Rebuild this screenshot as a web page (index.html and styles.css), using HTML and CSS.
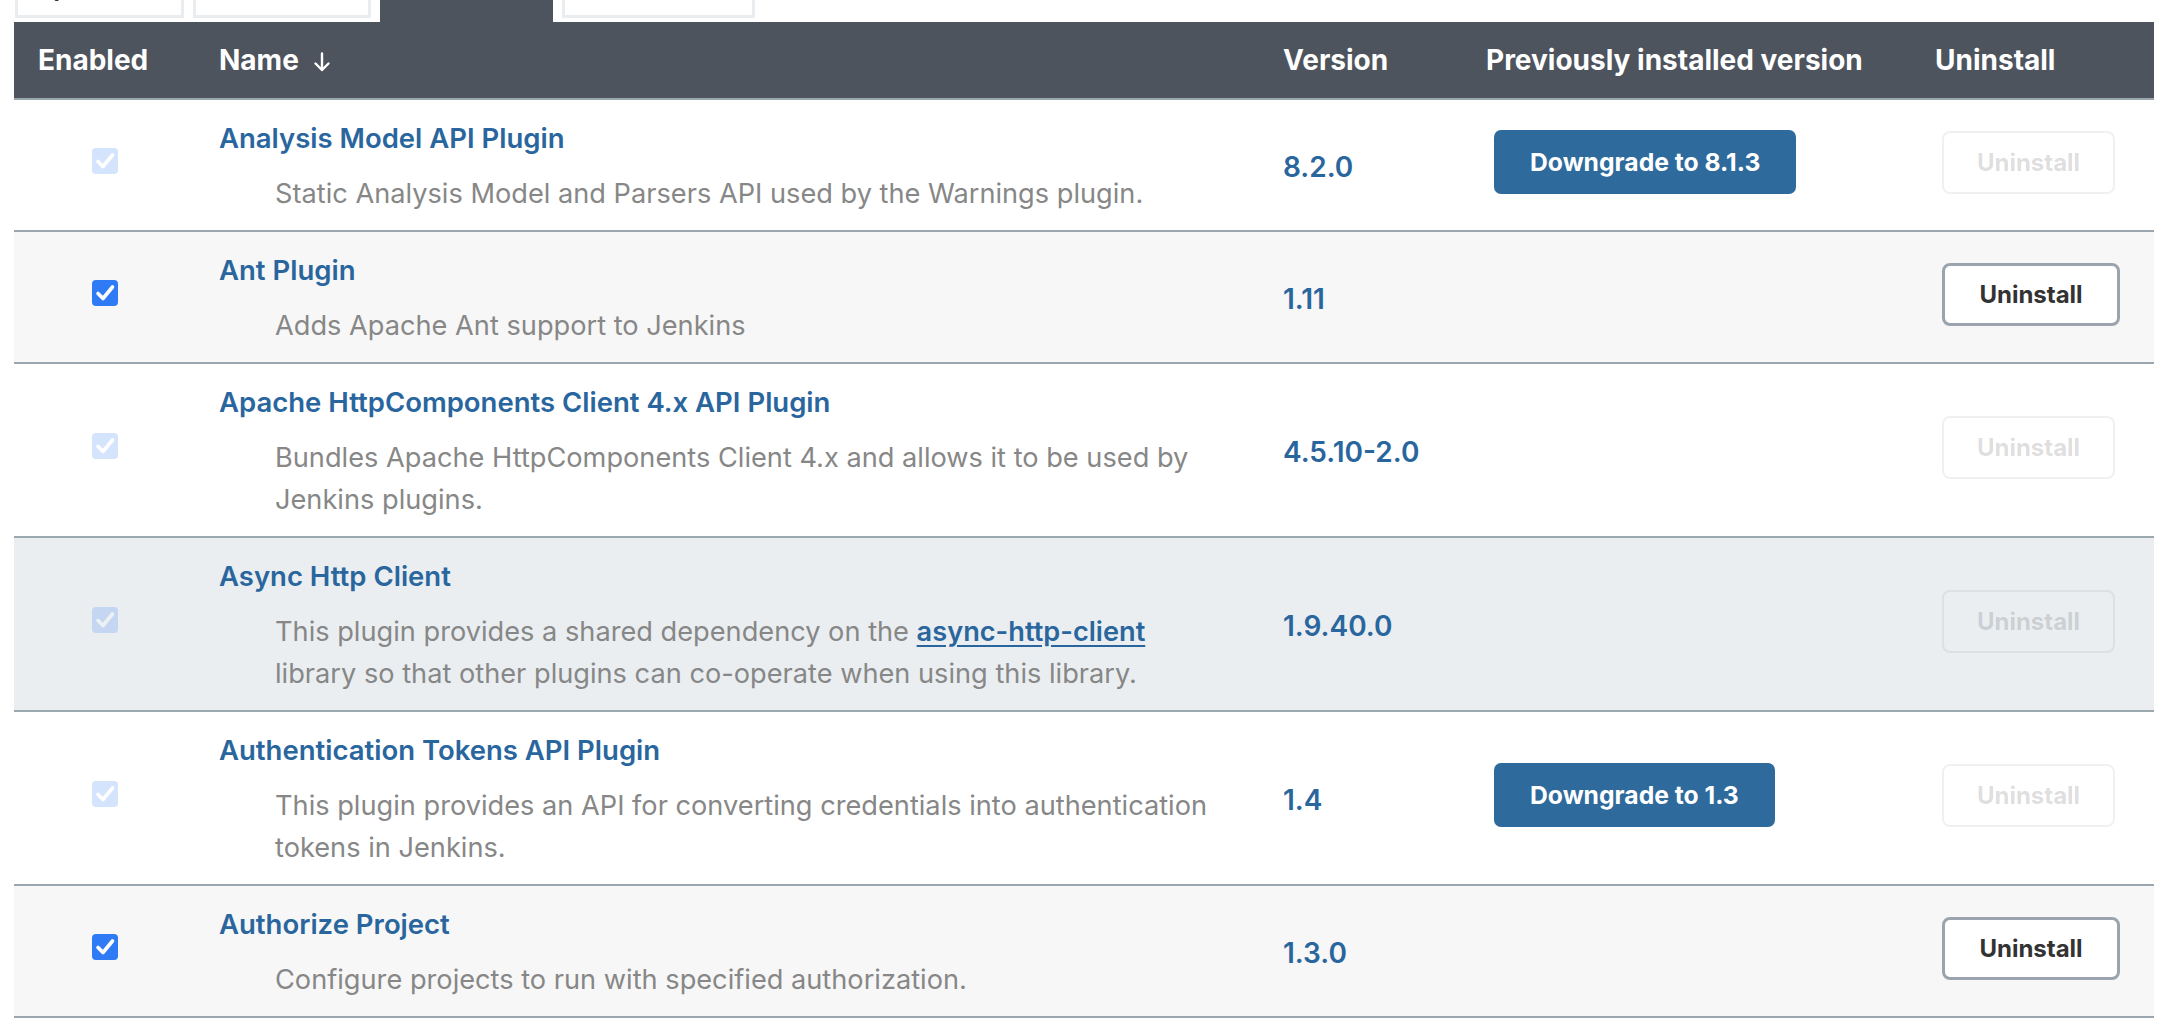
FILE: index.html
```html
<!DOCTYPE html>
<html lang="en">
<head>
  <meta charset="UTF-8" />
  <title>Installed plugins</title>
  <link rel="stylesheet" href="styles.css">
</head>
<body>

  <div class="page">
    <div class="tabs">
      <div class="tab" style="width: 169px"><span class="tab-label">Updates</span></div>
      <div class="tab" style="width: 178px"><span class="tab-label">Available</span></div>
      <div class="tab active" style="width: 173px"><span class="tab-label">Installed</span></div>
      <div class="tab" style="width: 193px"><span class="tab-label">Advanced</span></div>
    </div>

    <table class="plugins">
      <colgroup>
        <col class="col-enabled">
        <col class="col-name">
        <col class="col-version">
        <col class="col-prev">
        <col class="col-uninstall">
      </colgroup>
      <thead>
        <tr>
          <th>Enabled</th>
          <th>Name <svg class="sort-arrow" width="18" height="20" viewBox="0 0 18 20"><path d="M9 1.5V18M2.5 11.5L9 18l6.5-6.5" fill="none" stroke="#fff" stroke-width="2.4" stroke-linecap="round" stroke-linejoin="round"/></svg></th>
          <th>Version</th>
          <th>Previously installed version</th>
          <th>Uninstall</th>
        </tr>
      </thead>
      <tbody>
        <tr>
          <td class="center"><span class="check disabled"><svg width="26" height="26" viewBox="0 0 26 26"><path d="M6 13.5l5 5 9.5-11.5" fill="none" stroke="#fff" stroke-width="3.6" stroke-linecap="round" stroke-linejoin="round"/></svg></span></td>
          <td class="name-cell">
            <a class="plugin-name" href="#">Analysis Model API Plugin</a>
            <div class="plugin-desc">Static Analysis Model and Parsers API used by the Warnings plugin.</div>
          </td>
          <td class="version">8.2.0</td>
          <td class="action"><button class="btn-downgrade">Downgrade to 8.1.3</button></td>
          <td class="action"><button class="btn-uninstall" disabled>Uninstall</button></td>
        </tr>
        <tr class="alt">
          <td class="center"><span class="check"><svg width="26" height="26" viewBox="0 0 26 26"><path d="M6 13.5l5 5 9.5-11.5" fill="none" stroke="#fff" stroke-width="3.6" stroke-linecap="round" stroke-linejoin="round"/></svg></span></td>
          <td class="name-cell">
            <a class="plugin-name" href="#">Ant Plugin</a>
            <div class="plugin-desc">Adds Apache Ant support to Jenkins</div>
          </td>
          <td class="version">1.11</td>
          <td class="action"></td>
          <td class="action"><button class="btn-uninstall">Uninstall</button></td>
        </tr>
        <tr>
          <td class="center"><span class="check disabled"><svg width="26" height="26" viewBox="0 0 26 26"><path d="M6 13.5l5 5 9.5-11.5" fill="none" stroke="#fff" stroke-width="3.6" stroke-linecap="round" stroke-linejoin="round"/></svg></span></td>
          <td class="name-cell">
            <a class="plugin-name" href="#">Apache HttpComponents Client 4.x API Plugin</a>
            <div class="plugin-desc">Bundles Apache HttpComponents Client 4.x and allows it to be used by Jenkins plugins.</div>
          </td>
          <td class="version">4.5.10-2.0</td>
          <td class="action"></td>
          <td class="action"><button class="btn-uninstall" disabled>Uninstall</button></td>
        </tr>
        <tr class="hover">
          <td class="center"><span class="check disabled"><svg width="26" height="26" viewBox="0 0 26 26"><path d="M6 13.5l5 5 9.5-11.5" fill="none" stroke="#fff" stroke-width="3.6" stroke-linecap="round" stroke-linejoin="round"/></svg></span></td>
          <td class="name-cell">
            <a class="plugin-name" href="#">Async Http Client</a>
            <div class="plugin-desc">This plugin provides a shared dependency on the <a href="#">async-http-client</a> library so that other plugins can co-operate when using this library.</div>
          </td>
          <td class="version">1.9.40.0</td>
          <td class="action"></td>
          <td class="action"><button class="btn-uninstall" disabled>Uninstall</button></td>
        </tr>
        <tr>
          <td class="center"><span class="check disabled"><svg width="26" height="26" viewBox="0 0 26 26"><path d="M6 13.5l5 5 9.5-11.5" fill="none" stroke="#fff" stroke-width="3.6" stroke-linecap="round" stroke-linejoin="round"/></svg></span></td>
          <td class="name-cell">
            <a class="plugin-name" href="#">Authentication Tokens API Plugin</a>
            <div class="plugin-desc">This plugin provides an API for converting credentials into authentication tokens in Jenkins.</div>
          </td>
          <td class="version">1.4</td>
          <td class="action"><button class="btn-downgrade">Downgrade to 1.3</button></td>
          <td class="action"><button class="btn-uninstall" disabled>Uninstall</button></td>
        </tr>
        <tr class="alt">
          <td class="center"><span class="check"><svg width="26" height="26" viewBox="0 0 26 26"><path d="M6 13.5l5 5 9.5-11.5" fill="none" stroke="#fff" stroke-width="3.6" stroke-linecap="round" stroke-linejoin="round"/></svg></span></td>
          <td class="name-cell">
            <a class="plugin-name" href="#">Authorize Project</a>
            <div class="plugin-desc">Configure projects to run with specified authorization.</div>
          </td>
          <td class="version">1.3.0</td>
          <td class="action"></td>
          <td class="action"><button class="btn-uninstall">Uninstall</button></td>
        </tr>
      </tbody>
    </table>
  </div>

</body>
</html>
```

FILE: styles.css
```css
body {
  margin: 0;
  background: #fff;
  font-family: Inter, "Noto Sans", Arial, sans-serif;
  color: #333;
}

.page {
  padding: 0 16px 0 14px;
}

.tabs {
  display: flex;
  align-items: flex-start;
  gap: 9px;
  padding-left: 1px;
}

.tab {
  box-sizing: border-box;
  height: 18px;
  overflow: hidden;
  border: 3px solid #e9edf0;
  border-top: none;
  background: #fff;
  padding-left: 16px;
}

.tab.active {
  height: 22px;
  background: #4d545d;
  border-color: #4d545d;
}

.tab-label {
  display: block;
  margin-top: -28px;
  font-size: 26px;
  line-height: 30px;
  font-weight: 600;
  color: #333;
}

.tab.active .tab-label {
  color: #fff;
}

.plugins {
  width: 100%;
  border-collapse: collapse;
  table-layout: fixed;
}

.col-enabled { width: 181px; }
.col-name { width: 1064px; }
.col-version { width: 203px; }
.col-prev { width: 449px; }
.col-uninstall { width: 243px; }

.plugins th {
  height: 76px;
  padding: 0 0 0 24px;
  background: #4d545d;
  color: #fff;
  font-size: 28px;
  font-weight: 700;
  text-align: left;
  border-bottom: 2px solid #9ba7af;
  white-space: nowrap;
}

.sort-arrow {
  vertical-align: -2px;
  margin-left: 8px;
}

.plugins td {
  padding: 18px 0 15px 24px;
  vertical-align: middle;
  border-bottom: 2px solid #9ba7af;
}

.plugins td.name-cell {
  padding-right: 30px;
}

.plugins td.action {
  padding-top: 13px;
  padding-bottom: 19px;
}

.plugins td.center {
  padding: 12px 0 20px;
  text-align: center;
}

.plugins tr.alt td {
  background: #f7f7f7;
}

.plugins tr.hover td {
  background: #eaeef1;
}

.check {
  display: inline-block;
  width: 26px;
  height: 26px;
  border-radius: 4px;
  background: #2f7bf5;
  vertical-align: middle;
}

.check svg {
  display: block;
}

.check.disabled {
  opacity: 0.2;
}

.plugin-name {
  display: block;
  font-size: 27.5px;
  line-height: 40px;
  font-weight: 600;
  color: #2a669e;
  text-decoration: none;
}

.plugin-desc {
  margin: 15px 0 0 56px;
  font-size: 27.2px;
  line-height: 42px;
  color: #878787;
}

.plugin-desc a {
  color: #2a669e;
  font-weight: 600;
  text-decoration: underline;
  text-underline-offset: 4px;
}

.version {
  font-size: 28px;
  font-weight: 600;
  color: #2a669e;
}

.btn-downgrade {
  margin-left: 8px;
  height: 64px;
  padding: 0 36px;
  border: none;
  border-radius: 7px;
  background: #2e6a9c;
  color: #fff;
  font-family: inherit;
  font-size: 24.7px;
  font-weight: 700;
  cursor: pointer;
}

.btn-uninstall {
  box-sizing: border-box;
  margin-left: 7px;
  width: 178px;
  height: 63px;
  border: 3px solid #9ba4ac;
  border-radius: 8px;
  background: #fff;
  color: #333;
  font-family: inherit;
  font-size: 24px;
  font-weight: 700;
  cursor: pointer;
}

.btn-uninstall:disabled {
  width: 173px;
  border: 2px solid rgba(0, 0, 0, 0.06);
  background: transparent;
  color: rgba(0, 0, 0, 0.14);
  cursor: default;
}
```
